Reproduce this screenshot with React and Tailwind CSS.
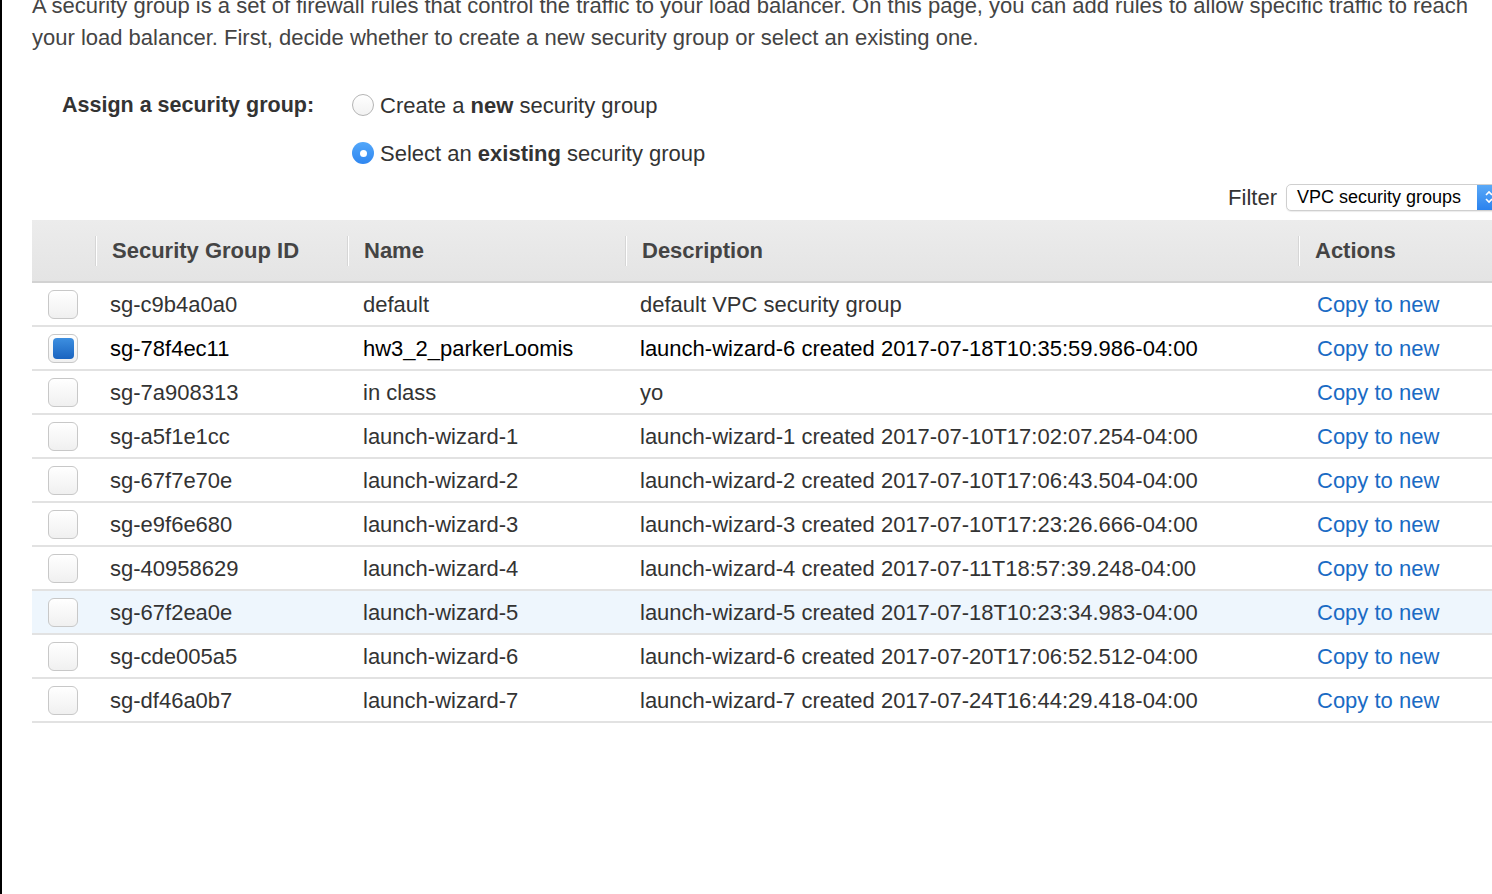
import React from "react";

const rows = [
  { id: "sg-c9b4a0a0", name: "default", desc: "default VPC security group" },
  { id: "sg-78f4ec11", name: "hw3_2_parkerLoomis", desc: "launch-wizard-6 created 2017-07-18T10:35:59.986-04:00", checked: true },
  { id: "sg-7a908313", name: "in class", desc: "yo" },
  { id: "sg-a5f1e1cc", name: "launch-wizard-1", desc: "launch-wizard-1 created 2017-07-10T17:02:07.254-04:00" },
  { id: "sg-67f7e70e", name: "launch-wizard-2", desc: "launch-wizard-2 created 2017-07-10T17:06:43.504-04:00" },
  { id: "sg-e9f6e680", name: "launch-wizard-3", desc: "launch-wizard-3 created 2017-07-10T17:23:26.666-04:00" },
  { id: "sg-40958629", name: "launch-wizard-4", desc: "launch-wizard-4 created 2017-07-11T18:57:39.248-04:00" },
  { id: "sg-67f2ea0e", name: "launch-wizard-5", desc: "launch-wizard-5 created 2017-07-18T10:23:34.983-04:00", hover: true },
  { id: "sg-cde005a5", name: "launch-wizard-6", desc: "launch-wizard-6 created 2017-07-20T17:06:52.512-04:00" },
  { id: "sg-df46a0b7", name: "launch-wizard-7", desc: "launch-wizard-7 created 2017-07-24T16:44:29.418-04:00" },
];

const Checkbox = ({ checked }) => (
  <div className="w-[30px] h-[29px] rounded-[6px] border border-[#c8c8c8] bg-gradient-to-b from-white to-[#f0f0f0] flex items-center justify-center">
    {checked && (
      <div className="w-[21px] h-[21px] rounded-[4px] bg-gradient-to-b from-[#3d8fe0] to-[#1a64c0]" />
    )}
  </div>
);

const Radio = ({ checked }) =>
  checked ? (
    <div className="w-[22px] h-[22px] rounded-full bg-gradient-to-b from-[#52a7fa] to-[#2f86f0] flex items-center justify-center">
      <div className="w-[7px] h-[7px] rounded-full bg-white" />
    </div>
  ) : (
    <div className="w-[22px] h-[22px] rounded-full border border-[#b5b5b5] bg-gradient-to-b from-white to-[#f2f2f2]" />
  );

const HeaderCell = ({ children, divider = true }) => (
  <div className="flex items-center h-full pl-[17px] whitespace-nowrap">
    {divider && <div className="w-[2px] h-[30px] bg-[#d6d6d6] border-r border-white -ml-[17px] mr-[15px]" />}
    {children}
  </div>
);

const App = () => {
  return (
    <div className="w-[1492px] h-[894px] overflow-hidden bg-white flex font-[Liberation_Sans,Arial,Helvetica,sans-serif]">
      <div className="w-[2px] h-full bg-black shrink-0" />
      <div className="flex-1 min-w-0 pl-[30px]">
        <p className="mt-[-10px] text-[22px] leading-[32px] text-[#444] whitespace-nowrap">
          A security group is a set of firewall rules that control the traffic to your load balancer. On this page, you can add rules to allow specific traffic to reach
          <br />
          your load balancer. First, decide whether to create a new security group or select an existing one.
        </p>

        <div className="flex mt-[27px] pl-[30px]">
          <div className="w-[290px] text-[21.5px] font-bold text-[#333] leading-[48px]">Assign a security group:</div>
          <div className="flex flex-col">
            <div className="flex items-center gap-[6px] h-[48px] text-[22px] text-[#333]">
              <Radio />
              <span>
                Create a <b>new</b> security group
              </span>
            </div>
            <div className="flex items-center gap-[6px] h-[48px] text-[22px] text-[#333]">
              <Radio checked />
              <span>
                Select an <b>existing</b> security group
              </span>
            </div>
          </div>
        </div>

        <div className="flex justify-end items-center h-[26px] mt-[7px] gap-[9px]">
          <span className="text-[22px] text-[#333]">Filter</span>
          <div className="w-[216px] shrink-0 mr-[-10px] h-[27px] flex rounded-[5px] border border-[#cfcfcf] bg-white shadow-[0_1px_1px_rgba(0,0,0,0.08)] overflow-hidden">
            <span className="flex-1 pl-[10px] text-[18px] leading-[25px] text-black whitespace-nowrap">VPC security groups</span>
            <div className="w-[24px] h-full bg-gradient-to-b from-[#5aa9f7] to-[#2a82ee] flex items-center justify-center">
              <svg width="10" height="16" viewBox="0 0 10 16" fill="none" stroke="white" strokeWidth="1.6">
                <path d="M2 6 L5 3 L8 6" />
                <path d="M2 10 L5 13 L8 10" />
              </svg>
            </div>
          </div>
        </div>

        <div className="mt-[10px] w-[1500px]">
          <div className="grid grid-cols-[63px_252px_278px_673px_1fr] h-[63px] bg-gradient-to-b from-[#ececec] to-[#e4e4e4] border-b-2 border-[#d2d2d2] text-[22px] font-bold text-[#444]">
            <div />
            <HeaderCell>Security Group ID</HeaderCell>
            <HeaderCell>Name</HeaderCell>
            <HeaderCell>Description</HeaderCell>
            <HeaderCell>Actions</HeaderCell>
          </div>
          {rows.map((r) => (
            <div
              key={r.id}
              className={`grid grid-cols-[63px_252px_278px_673px_1fr] h-[44px] border-b-2 border-[#e2e2e2] text-[22px] items-center whitespace-nowrap ${
                r.hover ? "bg-[#eef6fd]" : "bg-white"
              } ${r.checked ? "text-black" : "text-[#333]"}`}
            >
              <div className="pl-[16px] flex items-center">
                <Checkbox checked={r.checked} />
              </div>
              <div className="pl-[15px]">{r.id}</div>
              <div className="pl-[16px]">{r.name}</div>
              <div className="pl-[15px]">{r.desc}</div>
              <div className="pl-[19px] text-[#1a6bc4]">Copy to new</div>
            </div>
          ))}
        </div>
      </div>
    </div>
  );
};

export default App;
